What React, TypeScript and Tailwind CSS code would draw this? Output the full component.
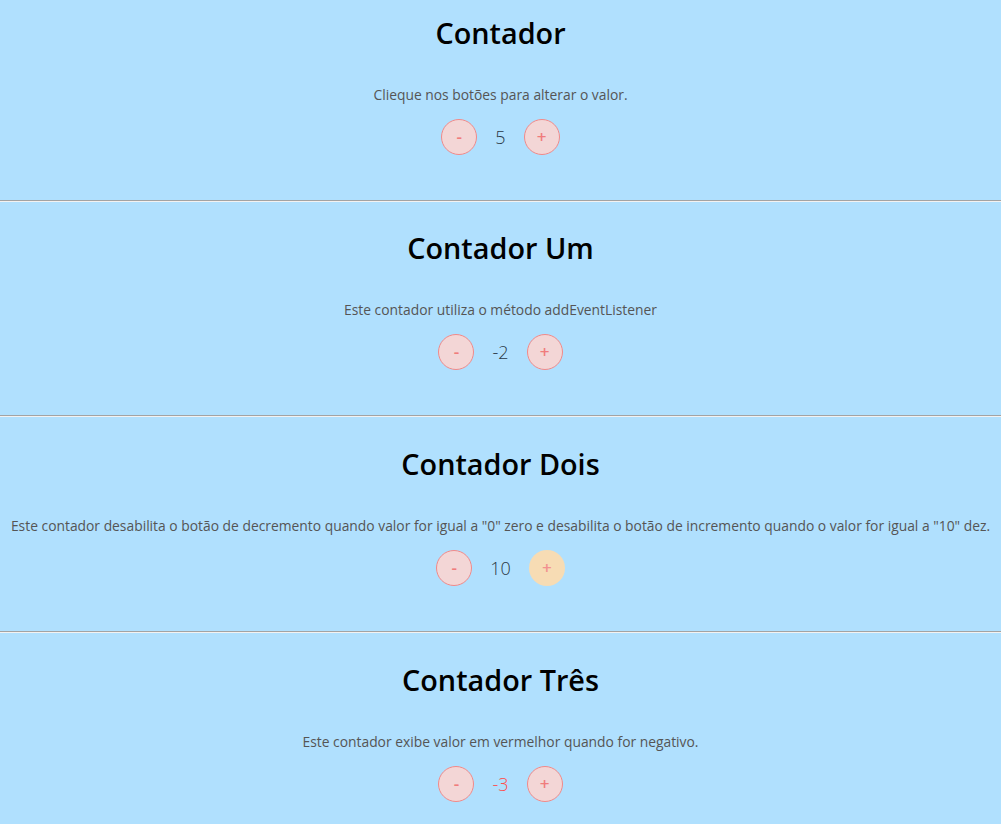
import { useState } from "react";

type CounterProps = {
  title: string;
  description: string;
  initial: number;
  min?: number;
  max?: number;
  redWhenNegative?: boolean;
  first?: boolean;
};

function Counter({
  title,
  description,
  initial,
  min,
  max,
  redWhenNegative,
  first,
}: CounterProps) {
  const [value, setValue] = useState(initial);

  const minusDisabled = min !== undefined && value <= min;
  const plusDisabled = max !== undefined && value >= max;

  const btn =
    "flex h-9 w-9 items-center justify-center rounded-full text-[17px] font-semibold";
  const enabled = "border border-[#f08a8a] bg-[#f3d6d6] text-[#f07c7c]";
  const disabled = "bg-[#f7dcb4] text-[#f29090]";

  return (
    <section className={first ? "pt-[14px] pb-[45px]" : "pt-[28px] pb-[45px]"}>
      <h1 className="text-center text-[28.8px] leading-[38px] font-semibold text-black">
        {title}
      </h1>

      <p className="mt-[33px] text-center text-[13.85px] leading-5 text-[#555]">
        {description}
      </p>

      <div className="mt-[14px] flex items-center justify-center gap-[18px]">
        <button
          type="button"
          disabled={minusDisabled}
          onClick={() => setValue(value - 1)}
          className={`${btn} ${minusDisabled ? disabled : enabled}`}
        >
          -
        </button>

        <span
          className={
            redWhenNegative && value < 0
              ? "text-lg font-light text-[#ff4d4d]"
              : "text-lg font-light text-[#2a3744]"
          }
        >
          {value}
        </span>

        <button
          type="button"
          disabled={plusDisabled}
          onClick={() => setValue(value + 1)}
          className={`${btn} ${plusDisabled ? disabled : enabled}`}
        >
          +
        </button>
      </div>
    </section>
  );
}

function Divider() {
  return <div className="h-0.5 border-t border-b border-t-[#a3a3a3] border-b-[#f2f2f2]" />;
}

export default function App() {
  return (
    <div
      className="min-h-screen bg-[#b0e0fe]"
      style={{ fontFamily: '"Open Sans", "Liberation Sans", sans-serif' }}
    >
      <Counter
        first
        title="Contador"
        description="Clieque nos botões para alterar o valor."
        initial={5}
      />
      <Divider />
      <div className="-mt-px">
        <Counter
          title="Contador Um"
          description="Este contador utiliza o método addEventListener"
          initial={-2}
        />
      </div>
      <Divider />
      <Counter
        title="Contador Dois"
        description={
          'Este contador desabilita o botão de decremento quando valor for igual a "0" zero e desabilita o botão de incremento quando o valor for igual a "10" dez.'
        }
        initial={10}
        min={0}
        max={10}
      />
      <Divider />
      <Counter
        title="Contador Três"
        description="Este contador exibe valor em vermelhor quando for negativo."
        initial={-3}
        redWhenNegative
      />
    </div>
  );
}
